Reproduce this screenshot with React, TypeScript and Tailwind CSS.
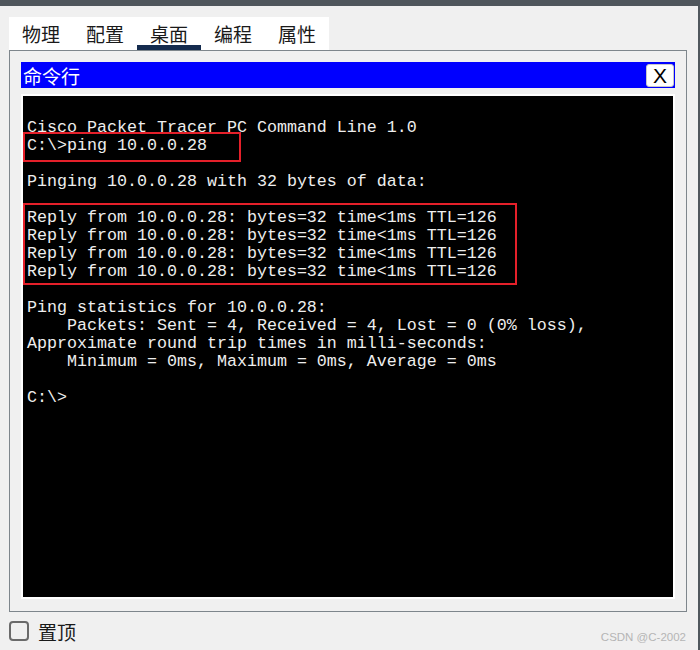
import React from "react";

const cjk = { fontFamily: '"Noto Sans CJK SC", "Noto Sans", sans-serif' };
const mono = { fontFamily: '"Liberation Mono", "Courier New", monospace' };

const lines = [
  "Cisco Packet Tracer PC Command Line 1.0",
  "C:\\>ping 10.0.0.28",
  "",
  "Pinging 10.0.0.28 with 32 bytes of data:",
  "",
  "Reply from 10.0.0.28: bytes=32 time<1ms TTL=126",
  "Reply from 10.0.0.28: bytes=32 time<1ms TTL=126",
  "Reply from 10.0.0.28: bytes=32 time<1ms TTL=126",
  "Reply from 10.0.0.28: bytes=32 time<1ms TTL=126",
  "",
  "Ping statistics for 10.0.0.28:",
  "    Packets: Sent = 4, Received = 4, Lost = 0 (0% loss),",
  "Approximate round trip times in milli-seconds:",
  "    Minimum = 0ms, Maximum = 0ms, Average = 0ms",
  "",
  "C:\\>",
];

const tabs = ["物理", "配置", "桌面", "编程", "属性"];

export default function App() {
  return (
    <div className="w-[700px] h-[650px] bg-[#f0f0f0] flex flex-col overflow-hidden relative">
      <div className="h-[6px] bg-[#4f565c] shrink-0" />
      <div className="flex-1 flex flex-col border-r-2 border-[#50575d] pl-[9px] pr-[11px]">
        {/* tabs */}
        <div className="mt-[11px] h-[33px] w-[320px] bg-white flex" style={cjk}>
          {tabs.map((t, i) => (
            <div
              key={t}
              className="w-[64px] h-full flex flex-col items-center justify-between text-[19px] leading-none text-[#1a1a1a]"
            >
              <span className="pt-[7px]">{t}</span>
              {i === 2 ? <div className="w-full h-[5px] bg-[#142b4e]" /> : <div className="h-[5px]" />}
            </div>
          ))}
        </div>
        {/* panel */}
        <div className="h-[562px] border border-[#7e868c] px-[11px] pt-[11px] pb-[12px] flex flex-col">
          <div className="h-[26px] bg-[#0000ff] flex items-center justify-between pl-[2px] pr-[1px] shrink-0">
            <span className="text-white text-[19px] leading-none" style={cjk}>
              命令行
            </span>
            <div
              className="w-[28px] h-[23px] bg-white rounded-[3px] border border-[#c8c8c8] flex items-center justify-center text-[21px] leading-none text-black"
              style={{ fontFamily: '"Liberation Sans", Arial, sans-serif' }}
            >
              X
            </div>
          </div>
          <div className="mt-[6px] flex-1 border-2 border-white bg-black relative">
            <div
              className="pt-[23px] pl-[4px] text-[16.67px] leading-[18px] text-[#eeeeee] whitespace-pre"
              style={mono}
            >
              {lines.map((l, i) => (
                <div key={i} className="h-[18px]">
                  {l}
                </div>
              ))}
            </div>
            <div className="absolute left-0 top-[36px] w-[218px] h-[30px] border-2 border-[#e5202a]" />
            <div className="absolute left-0 top-[107px] w-[494px] h-[82px] border-2 border-[#e5202a]" />
          </div>
        </div>
        {/* bottom */}
        <div className="flex items-center mt-[9px] gap-[9px]">
          <div className="w-[20px] h-[20px] rounded-[4px] border-2 border-[#6a6a6a] bg-[#f0f0f0]" />
          <span className="text-[19px] leading-none text-[#1a1a1a]" style={cjk}>
            置顶
          </span>
        </div>
      </div>
      <div
        className="absolute right-[14px] bottom-[7px] text-[11.5px] leading-none text-[#b5b5b5]"
        style={{ fontFamily: '"Liberation Sans", Arial, sans-serif' }}
      >
        CSDN @C-2002
      </div>
    </div>
  );
}
